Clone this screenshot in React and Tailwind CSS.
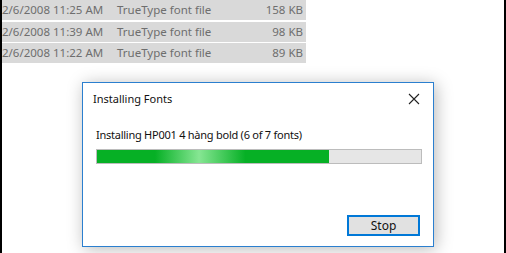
import React from "react";

const rows = [
  ["2/6/2008 11:25 AM", "TrueType font file", "158 KB"],
  ["2/6/2008 11:39 AM", "TrueType font file", "98 KB"],
  ["2/6/2008 11:22 AM", "TrueType font file", "89 KB"],
];

export default function App() {
  return (
    <div
      className="relative w-[506px] h-[253px] bg-white overflow-hidden border-l-2 border-r-2 border-black"
      style={{ fontFamily: '"Noto Sans", "Open Sans", sans-serif' }}
    >
      <div className="flex flex-col gap-[1.5px] w-[304px] pt-0">
        {rows.map((r, i) => (
          <div
            key={i}
            className="flex items-center h-[20px] bg-[#d9d9d9] text-[11.5px] text-[#6e6e6e] leading-none"
          >
            <span className="w-[115px]">{r[0]}</span>
            <span className="flex-1">{r[1]}</span>
            <span className="pr-[3px]">{r[2]}</span>
          </div>
        ))}
      </div>

      <div className="absolute left-[80px] top-[82px] w-[352px] h-[165px] bg-white border border-[#2b7fcf] shadow-[2px_2px_16px_rgba(0,0,0,0.28)] flex flex-col">
        <div className="flex items-center justify-between h-[31px] pl-[10px] pr-[13px] pt-[1px]">
          <span className="text-[11px] text-[#111]">Installing Fonts</span>
          <svg width="12" height="12" viewBox="0 0 12 12">
            <path d="M1 1 L11 11 M11 1 L1 11" stroke="#222" strokeWidth="1.1" fill="none" />
          </svg>
        </div>
        <div className="flex flex-col px-[13px] pt-[15px]">
          <span className="text-[11px] text-[#111] leading-none tracking-[-0.25px]">
            Installing HP001 4 hàng bold (6 of 7 fonts)
          </span>
          <div className="mt-[9px] h-[15px] w-[326px] bg-[#e6e6e6] border border-[#bcbcbc] overflow-hidden">
            <div className="h-full w-[232px] bg-[linear-gradient(90deg,#06b025_0%,#06b025_25%,#86e693_44%,#06b025_64%,#06b025_100%)]" />
          </div>
        </div>
        <div className="flex-1" />
        <div className="flex justify-end pr-[13px] pb-[10px]">
          <button className="w-[73px] h-[21px] bg-[#e1e1e1] border-2 border-[#0078d7] text-[12px] text-[#111] leading-none">
            Stop
          </button>
        </div>
      </div>
    </div>
  );
}
